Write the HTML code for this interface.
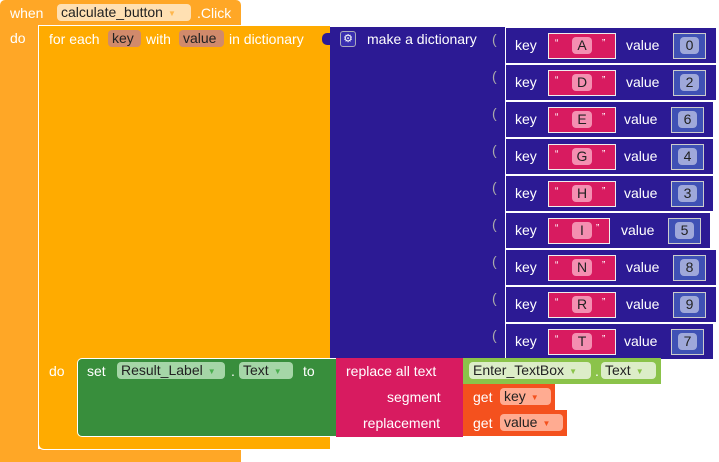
<!DOCTYPE html>
<html><head><style>
body{margin:0;width:719px;height:462px;background:#fff;position:relative;overflow:hidden;font-family:"Liberation Sans",sans-serif;font-size:14px;color:#fff}
div{position:absolute;box-sizing:border-box}
.t{white-space:nowrap;line-height:16px}
.f{border-radius:4px;color:#222;padding:0 4px;line-height:17px;height:17px;white-space:nowrap}
.ar{font-size:8px;margin-left:5px;vertical-align:1px}
</style></head><body>
<!-- event block -->
<div style="left:0;top:0;width:241px;height:25px;background:#ffa726;border-radius:5px 5px 0 0"></div>
<div style="left:0;top:25px;width:38px;height:437px;background:#ffa726"></div>
<div style="left:0;top:449px;width:241px;height:13px;background:#ffa726"></div>
<div class="t" style="left:10px;top:5px">when</div>
<div class="f" style="left:57px;top:4px;width:134px;background:#ffe0b2">calculate_button<span class="ar" style="color:#ffb74d">▼</span></div>
<div class="t" style="left:197px;top:5px">.Click</div>
<div class="t" style="left:10px;top:30px">do</div>
<!-- for each -->
<div style="left:38px;top:25px;width:292px;height:425px;background:#ffab00;border:1px solid #fff;border-right:none;border-radius:6px 0 0 6px"></div>
<div style="left:39px;top:26px;width:291px;height:330px;background:#ffab00"></div>
<div class="t" style="left:49px;top:31px">for each</div>
<div class="f" style="left:108px;top:30px;background:#d18a6b;width:33px">key</div>
<div class="t" style="left:146px;top:31px">with</div>
<div class="f" style="left:179px;top:30px;background:#d18a6b;width:45px">value</div>
<div class="t" style="left:229px;top:31px">in dictionary</div>
<div class="t" style="left:49px;top:363px">do</div>
<div style="left:330px;top:336px;width:6px;height:22px;background:#ffab00"></div>
<!-- dictionary -->
<div style="left:330px;top:27px;width:176px;height:331px;background:#2c1a94"></div>
<div style="left:322px;top:33px;width:10px;height:12px;background:#2c1a94;border-radius:5px 0 0 5px"></div>
<div style="left:340px;top:31px;width:16px;height:16px;border:1px solid #aab;border-radius:3px;background:#3a2fb0;color:#fff;font-size:11px;text-align:center;line-height:14px">⚙</div>
<div class="t" style="left:367px;top:31px">make a dictionary</div>
<div class="t" style="left:492px;top:31px;color:#aaa">(</div>
<!-- pairs -->
<div id="pairs"></div>
<!-- green set -->
<div style="left:77px;top:358px;width:260px;height:79px;background:#388e3c;border:1px solid #fff;border-right:none;border-radius:5px 0 0 5px"></div>
<div class="t" style="left:87px;top:363px">set</div>
<div class="f" style="left:117px;top:362px;width:108px;background:#a5d6a7">Result_Label<span class="ar" style="color:#4caf50">▼</span></div>
<div class="t" style="left:231px;top:363px">.</div>
<div class="f" style="left:239px;top:362px;width:54px;background:#a5d6a7">Text<span class="ar" style="color:#4caf50">▼</span></div>
<div class="t" style="left:303px;top:363px">to</div>
<!-- replace -->
<div style="left:336px;top:358px;width:127px;height:79px;background:#d81b60"></div>
<div class="t" style="left:346px;top:363px">replace all text</div>
<div class="t" style="left:387px;top:389px">segment</div>
<div class="t" style="left:363px;top:415px">replacement</div>
<div style="left:463px;top:358px;width:198px;height:26px;background:#8bc34a"></div>
<div class="f" style="left:469px;top:362px;width:122px;background:#dcedc8">Enter_TextBox<span class="ar" style="color:#8bc34a">▼</span></div>
<div class="t" style="left:595px;top:363px;color:#fff">.</div>
<div class="f" style="left:601px;top:362px;width:55px;background:#dcedc8">Text<span class="ar" style="color:#8bc34a">▼</span></div>
<div style="left:463px;top:384px;width:92px;height:26px;background:#f4511e"></div>
<div class="t" style="left:473px;top:389px">get</div>
<div class="f" style="left:500px;top:388px;width:51px;background:#ffab91">key<span class="ar" style="color:#f4511e">▼</span></div>
<div style="left:463px;top:410px;width:104px;height:26px;background:#f4511e"></div>
<div class="t" style="left:473px;top:415px">get</div>
<div class="f" style="left:500px;top:414px;width:63px;background:#ffab91">value<span class="ar" style="color:#f4511e">▼</span></div>
<script>
var rows=[["A","0",717],["D","2",717],["E","6",714],["G","4",714],["H","3",714],["I","5",711],["N","8",717],["R","9",717],["T","7",714]];
var h="";
rows.forEach(function(r,i){var y=27+i*37;var w=r[2]-505;var sw=r[0]=="I"?62:68;var vx=r[2]==711?621:(r[2]==714?624:626);var nx=vx+47;
h+='<div style="left:505px;top:'+y+'px;width:'+w+'px;height:37px;background:#2c1a94;border:1px solid #fff"></div>';
if(i>0)h+='<div class="t" style="left:492px;top:'+(y+4)+'px;color:#aaa">(</div>';
h+='<div class="t" style="left:515px;top:'+(y+10)+'px">key</div>';
h+='<div style="left:548px;top:'+(y+6)+'px;width:'+sw+'px;height:26px;background:#d81b60;border:1px solid #eee"></div>';
h+='<div class="t" style="left:555px;top:'+(y+9)+'px;font-size:10px">“</div>';
h+='<div class="f" style="left:572px;top:'+(y+10)+'px;width:20px;background:#f48fb1;text-align:center">'+r[0]+'</div>';
h+='<div class="t" style="left:'+(548+sw-14)+'px;top:'+(y+9)+'px;font-size:10px">”</div>';
h+='<div class="t" style="left:'+vx+'px;top:'+(y+10)+'px">value</div>';
h+='<div style="left:'+nx+'px;top:'+(y+6)+'px;width:33px;height:26px;background:#3f51b5;border:1px solid #ccc"></div>';
h+='<div class="f" style="left:'+(nx+7)+'px;top:'+(y+10)+'px;width:19px;background:#9fa8da;text-align:center;padding:0">'+r[1]+'</div>';
});
document.getElementById("pairs").outerHTML=h;
</script>
</body></html>
